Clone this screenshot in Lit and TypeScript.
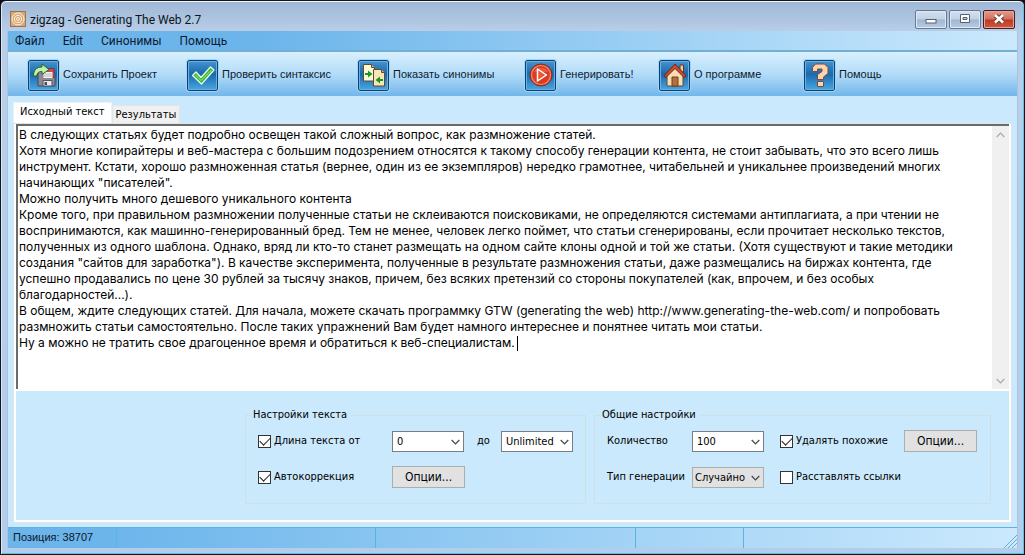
import { LitElement, html, svg, css, TemplateResult } from "lit";
import { customElement, state } from "lit/decorators.js";

const SOURCE_TEXT = `В следующих статьях будет подробно освещен такой сложный вопрос, как размножение статей.
Хотя многие копирайтеры и веб-мастера с большим подозрением относятся к такому способу генерации контента, не стоит забывать, что это всего лишь
инструмент. Кстати, хорошо размноженная статья (вернее, один из ее экземпляров) нередко грамотнее, читабельней и уникальнее произведений многих
начинающих "писателей".
Можно получить много дешевого уникального контента
Кроме того, при правильном размножении полученные статьи не склеиваются поисковиками, не определяются системами антиплагиата, а при чтении не
воспринимаются, как машинно-генерированный бред. Тем не менее, человек легко поймет, что статьи сгенерированы, если прочитает несколько текстов,
полученных из одного шаблона. Однако, вряд ли кто-то станет размещать на одном сайте клоны одной и той же статьи. (Хотя существуют и такие методики
создания "сайтов для заработка"). В качестве эксперимента, полученные в результате размножения статьи, даже размещались на биржах контента, где
успешно продавались по цене 30 рублей за тысячу знаков, причем, без всяких претензий со стороны покупателей (как, впрочем, и без особых
благодарностей...).
В общем, ждите следующих статей. Для начала, можете скачать программку GTW (generating the web) http://www.generating-the-web.com/ и попробовать
размножить статьи самостоятельно. После таких упражнений Вам будет намного интереснее и понятнее читать мои статьи.
Ну а можно не тратить свое драгоценное время и обратиться к веб-специалистам. `;

const icon = (body: TemplateResult) =>
  html`<svg class="glyph" viewBox="0 0 24 24" aria-hidden="true">${body}</svg>`;

const saveIcon = icon(svg`
  <path d="M6 8.500H21l2 2V23H6z" fill="#8d8a94" stroke="#4b4757"/>
  <path d="M14 5.500h8v9h-8z" fill="#d9434a" stroke="#5b4050"/>
  <path d="M11.500 9h9v6h-9z" fill="#f6f2f2"/><path d="M12 11h8M12 13h8" stroke="#b9b3b8"/>
  <path d="M11 17.500h9V23h-9z" fill="#eceaf0" stroke="#56525f"/><path d="M12.500 19h2.500v3h-2.500z" fill="#4d4a58"/>
  <path d="M1.500 13C1.500 7 4.500 4 10 4V1l7 5.500-7 5V8.500C6.500 8.500 5 10 4.800 13z" fill="#c3efac" stroke="#1f6a25"/>`);
const checkIcon = icon(svg`
  <path d="M1.500 12.500 5 9l5 5.500L19.500 4 23 7 10.500 21z" fill="#2fae35" stroke="#e9fbe8" stroke-width="1.300" stroke-linejoin="round"/>
  <path d="M4.500 12l5.500 5.500L20.500 7" fill="none" stroke="#74d95c" stroke-width="1.500"/>`);
const pagesIcon = icon(svg`
  <path d="M1.500 1.500h8l3 3V18h-11z" fill="#fff6d5" stroke="#5d4b32"/><path d="M9.500 1.500v3h3" fill="#d9c591" stroke="#5d4b32"/>
  <path d="M11.500 6.500h8l3 3V23h-11z" fill="#fbe5b4" stroke="#5d4b32"/><path d="M19.500 6.500v3h3" fill="#d9b981" stroke="#5d4b32"/>
  <path d="M3 10h3V7.500l4.500 3.500L6 14.500V12H3z" fill="#119c25"/>
  <path d="M21 16h-3v-2.500L13.500 17l4.500 3.500V18h3z" fill="#119c25"/>`);
const playIcon = icon(svg`
  <circle cx="12" cy="12" r="11" fill="#d93b25" stroke="#8c2a22"/>
  <circle cx="12" cy="12" r="9.500" fill="none" stroke="#f08a68" stroke-width="1.200"/>
  <path d="M5 9a8 8 0 0 1 14 0z" fill="#ed6b4c" opacity=".7"/>
  <path d="M8.500 6 17.500 12 8.500 18z" fill="#ee5532" stroke="#fff" stroke-width="1.500" stroke-linejoin="round"/>`);
const homeIcon = icon(svg`
  <path d="M17 2h3.500v7H17z" fill="#e8cda4" stroke="#5b3927"/>
  <path d="M4 11.500 12 4l8 7.500V23H4z" fill="#f8dcb2" stroke="#69482f"/>
  <path d="M.8 13 12 1l11.200 12-2 1.500L12 5.500 2.800 14.500z" fill="#cf4a28" stroke="#6b2618"/>
  <path d="M9 14h6v9H9z" fill="#b46f3c" stroke="#6e421f"/>`);
const helpIcon = icon(svg`
  <path d="M4.500 8.500V4.500L7.500 1h9l3.500 3.500v6L15.500 14v2.500h-6v-5l4.500-3V6h-4.500v2.500z" fill="#fbd3b2" stroke="#7a4a3a"/>
  <path d="M9.500 18.500h6v5h-6z" fill="#fbd3b2" stroke="#7a4a3a"/>`);

const TOOLS: [string, TemplateResult][] = [
  ["Сохранить Проект", saveIcon],
  ["Проверить синтаксис", checkIcon],
  ["Показать синонимы", pagesIcon],
  ["Генерировать!", playIcon],
  ["О программе", homeIcon],
  ["Помощь", helpIcon],
];

const chevron = (d: string) =>
  html`<svg class="chevron" viewBox="0 0 9 6" aria-hidden="true"><path d=${d} /></svg>`;
const DOWN = "M.7 1 4.500 4.800 8.300 1";
const UP = "M.7 5 4.500 1.200 8.300 5";

@customElement("app-root")
export class AppRoot extends LitElement {
  static styles = css`
    :host { display: block; height: 100vh; background: #0b0f16; }
    * { box-sizing: border-box; }
    button, select, input, textarea { font: inherit; color: inherit; margin: 0; border-radius: 0; }
    .window {
      height: 100%; display: flex; flex-direction: column;
      border: 1px solid #10151e; border-radius: 6px 6px 0 0;
      padding: 0 6px 6px; color: #000;
      font: 11px/14px "DejaVu Sans Condensed", "DejaVu Sans", sans-serif;
      background: linear-gradient(#9fb7d6, #b9cfe9 32px, #b4cdea);
      box-shadow: inset 0 1px #f4f8fc, inset 1px 0 #dceaf8, inset -1px -1px #55c3e8;
    }
    .titlebar {
      flex: none; height: 30px; display: flex; align-items: center; padding: 0 3px 0 3px;
      font: 12px/16px Roboto, sans-serif;
    }
    .appicon { width: 16px; height: 16px; margin: 6px 4px 0 0; }
    .title { flex: 1; margin: 8px 0 0; font: inherit; color: #0c1420; }
    .winbuttons { display: flex; gap: 2px; margin-top: 6px; }
    .winbutton {
      width: 32px; height: 19px; padding: 0; border: 1px solid #66798f; border-radius: 2px;
      background: linear-gradient(#d3e0ef, #c1d2e6 48%, #9fb7d3 52%, #b8cce3);
      box-shadow: inset 0 0 0 1px #dfe9f5; display: grid; place-items: center;
    }
    .winbutton.close {
      border-color: #4a1a20; box-shadow: inset 0 0 0 1px #e5a79c;
      background: linear-gradient(#e39a8c, #d2705c 48%, #bb3a24 52%, #cf5a3c);
    }
    .winbutton svg { width: 14px; height: 10px; }
    .client {
      flex: 1; min-height: 0; display: flex; flex-direction: column; background: #cbe9fc;
      border: 1px solid #a9c4e2; border-width: 0 1px; overflow: hidden;
    }
    .menubar {
      flex: none; height: 21px; display: flex; align-items: center; gap: 18px; padding: 0 7px;
      font: 12px/16px Roboto, sans-serif; border-bottom: 2px solid #73afd0;
      background: linear-gradient(90deg, #6cb5eb 25%, #cbe9fd);
    }
    .menubar button { border: 0; background: none; padding: 0; color: #0c1a30; }
    .toolbar {
      flex: none; height: 44px; display: grid; align-items: center; padding: 0 0 0 19px;
      grid-template-columns: 159fr 171fr 167fr 134fr 145fr 214fr;
      font: 11px/14px "Liberation Sans", Arial, sans-serif;
      background: linear-gradient(#d8f0fe, #b3dcf8 50%, #71b6ea);
    }
    .tool { border: 0; background: none; padding: 0; display: flex; align-items: center; gap: 4px; white-space: nowrap; color: #0c1a30; }
    .tool .box {
      width: 31px; height: 31px; border: 1px solid #0d3f74; display: grid; place-items: center;
      outline: 1px solid #a5d3f3; border-radius: 2px; margin: 2px 0 0 1px;
      background: linear-gradient(#4593cd, #1a69ad 45%, #48a7e0);
      box-shadow: inset 0 0 0 1px #66b2e4;
    }
    .glyph { width: 24px; height: 24px; display: block; }
    .tabs { flex: none; display: flex; align-items: flex-end; padding: 6px 5px 0; }
    .tab { height: 18px; padding: 0 3px; border: 1px solid #dfe6ea; border-bottom: 0; background: #f0f0f0; }
    .tab.active { height: 21px; background: #fff; padding: 0 6px 2px; border-color: #e7f2fa; }
    .page {
      flex: 1; min-height: 0; margin: 0 5px 4px; display: flex; flex-direction: column;
      border: 3px solid #fff; border-top-width: 1px; outline: 1px solid #d9e6ee; outline-offset: -1px;
    }
    .editor {
      flex: 1; min-height: 0; display: flex; position: relative; background: #fff;
      border: 1px solid #6b6b6b; border-width: 2px 0 0 2px;
    }
    .editor textarea {
      flex: 1; min-width: 0; border: 0; outline: 0; resize: none; background: none; white-space: pre; overflow: hidden;
      padding: 1px; font: 12px/16px Inter, Roboto, sans-serif;
    }
    .caret { position: absolute; left: 499px; top: 210px; width: 1px; height: 15px; background: #000; }
    .scrollbar { width: 17px; background: #f0f0f0; display: flex; flex-direction: column; justify-content: space-between; }
    .scrollbar button { border: 0; background: none; height: 17px; padding: 0; color: #a9a9a9; display: grid; place-items: center; }
    .chevron { width: 9px; height: 6px; fill: none; stroke: currentColor; stroke-width: 1.2; display: block; }
    .settings {
      flex: none; display: flex; justify-content: flex-end; align-items: flex-start; gap: 8px;
      height: 131px; padding: 17px 18px 0 0; border-top: 2px solid #fff;
    }
    .group { margin: 0; min-width: 0; height: 96px; border: 1px solid #cfdfe6; padding: 8px 10px 0 12px; }
    .group legend { padding: 0 4px 0 2px; margin-left: -7px; line-height: 14px; }
    .rows { display: grid; align-items: center; row-gap: 14px; grid-auto-rows: 22px; }
    .text .rows { grid-template-columns: 134px 85px 24px 73px; }
    .common .rows { grid-template-columns: 85px 88px 124px 75px; }
    .text { width: 341px; }
    .common { width: 397px; }
    .check { display: flex; align-items: center; gap: 3px; white-space: nowrap; }
    .check input {
      appearance: none; width: 13px; height: 13px; border: 1px solid #333; background: #fff; flex: none;
      display: grid; place-items: center;
    }
    .check input:checked::before {
      content: ""; width: 9px; height: 5px; border: solid #222; border-width: 0 0 1px 1px;
      transform: translateY(-1px) rotate(-45deg);
    }
    .select { position: relative; width: 72px; height: 21px; }
    .select select {
      appearance: none; width: 100%; height: 100%; border: 1px solid #767f87; background: #fff; padding: 0 0 0 4px;
      line-height: 17px;
    }
    .select.gray select { background: #e1e1e1; border-color: #adadad; padding-left: 2px; }
    .select .chevron { position: absolute; right: 4px; top: 8px; color: #444; pointer-events: none; }
    .push { width: 73px; height: 22px; border: 1px solid #adadad; background: #e1e1e1; padding: 0; font-size: 12px; }
    .statusbar {
      flex: none; height: 21px; display: grid; align-items: stretch; border-top: 1px solid #5cb4de;
      grid-template-columns: 109fr 259fr 260fr 108fr 273fr;
      font: 11px/19px "Liberation Sans", Arial, sans-serif; color: #0a1626;
      background: linear-gradient(90deg, #6cb5eb 10%, #cbe9fd);
    }
    .cell { padding-left: 5px; border-right: 1px solid #5cb4de; white-space: nowrap; }
    .cell.last { border-right: 0; display: flex; justify-content: flex-end; align-items: flex-end; }
    .grip { width: 14px; height: 14px; stroke: #5fb0d8; fill: none; }
  `;

  @state() private tab = 0;

  private select(id: string, label: string, value: string, kind = "") {
    return html`<div class="select ${kind}">
      <select id=${id} aria-label=${label}><option>${value}</option></select>${chevron(DOWN)}
    </div>`;
  }

  private check(label: string, checked: boolean) {
    return html`<label class="check"><input type="checkbox" .checked=${checked} />${label}</label>`;
  }

  render() {
    return html`
      <div class="window">
        <header class="titlebar">
          <svg class="appicon" viewBox="0 0 16 16" aria-hidden="true">
            <rect x=".5" y=".5" width="15" height="15" fill="#d6a877" stroke="#9c7450" />
            <g fill="none" stroke="#fff3e0"><circle cx="8" cy="8" r="6" /><circle cx="8" cy="8" r="3.700" /><circle cx="8" cy="8" r="1.500" /></g>
          </svg>
          <h1 class="title">zigzag - Generating The Web 2.7</h1>
          <div class="winbuttons">
            <button class="winbutton" aria-label="Свернуть">
              <svg viewBox="0 0 14 10"><rect x="2" y="5.500" width="10" height="3.500" fill="#fff" stroke="#56616f" /></svg>
            </button>
            <button class="winbutton" aria-label="Развернуть">
              <svg viewBox="0 0 14 10"><path d="M2.500.5h9v8h-9z" fill="#fff" stroke="#56616f" /><path d="M5 3.500h4v2H5z" fill="#b7c9df" stroke="#56616f" /></svg>
            </button>
            <button class="winbutton close" aria-label="Закрыть">
              <svg viewBox="0 0 14 10"><path d="M3.500 1.500l7 6.500M10.500 1.500l-7 6.500" stroke="#5b3a40" stroke-width="4.500" /><path d="M3 1l8 7.500M11 1l-8 7.500" stroke="#fff" stroke-width="2.500" /></svg>
            </button>
          </div>
        </header>
        <div class="client">
          <nav class="menubar">
            ${["Файл", "Edit", "Синонимы", "Помощь"].map((m) => html`<button>${m}</button>`)}
          </nav>
          <div class="toolbar">
            ${TOOLS.map(([label, glyph]) => html`<button class="tool"><span class="box">${glyph}</span>${label}</button>`)}
          </div>
          <div class="tabs" role="tablist">
            ${["Исходный текст", "Результаты"].map(
              (t, i) => html`<button role="tab" class="tab ${this.tab === i ? "active" : ""}"
                aria-selected=${this.tab === i} @click=${() => (this.tab = i)}>${t}</button>`
            )}
          </div>
          <main class="page">
            <div class="editor">
              <textarea aria-label="Исходный текст" spellcheck="false" .value=${SOURCE_TEXT}></textarea>
              <span class="caret"></span>
              <div class="scrollbar">
                <button aria-label="Вверх">${chevron(UP)}</button>
                <button aria-label="Вниз">${chevron(DOWN)}</button>
              </div>
            </div>
            <div class="settings">
              <fieldset class="group text">
                <legend>Настройки текста</legend>
                <div class="rows">
                  ${this.check("Длина текста от", true)} ${this.select("from", "Длина текста от", "0")}
                  <label for="to">до</label> ${this.select("to", "до", "Unlimited")}
                  ${this.check("Автокоррекция", true)} <button class="push">Опции...</button>
                </div>
              </fieldset>
              <fieldset class="group common">
                <legend>Общие настройки</legend>
                <div class="rows">
                  <label for="count">Количество</label> ${this.select("count", "Количество", "100")}
                  ${this.check("Удалять похожие", true)} <button class="push">Опции...</button>
                  <label for="kind">Тип генерации</label> ${this.select("kind", "Тип генерации", "Случайно", "gray")}
                  ${this.check("Расставлять ссылки", false)}
                </div>
              </fieldset>
            </div>
          </main>
          <footer class="statusbar">
            <div class="cell">Позиция: 38707</div>
            <div class="cell"></div><div class="cell"></div><div class="cell"></div>
            <div class="cell last">
              <svg class="grip" viewBox="0 0 14 14" aria-hidden="true"><path d="M1 14 14 1M5 14l9-9M9 14l5-5" /></svg>
            </div>
          </footer>
        </div>
      </div>
    `;
  }
}
